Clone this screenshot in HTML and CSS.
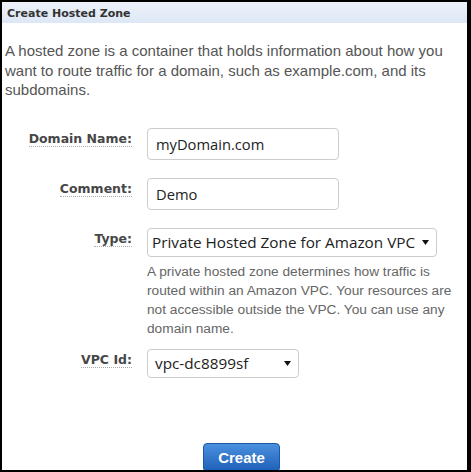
FILE: index.html
```html
<!DOCTYPE html>
<html lang="en">
<head>
  <meta charset="UTF-8">
  <meta name="viewport" content="width=device-width, initial-scale=1.0">
  <title>Create Hosted Zone</title>
  <link rel="stylesheet" href="styles.css">
</head>
<body>
  <div class="panel">
    <div class="panel-header">Create Hosted Zone</div>
    <p class="intro">A hosted zone is a container that holds information about how you want to route traffic for a domain, such as example.com, and its subdomains.</p>

    <div class="form">
      <div class="row">
        <div class="label"><span>Domain Name:</span></div>
        <div class="control"><input class="text-input" type="text" value="myDomain.com"></div>
      </div>
      <div class="row">
        <div class="label"><span>Comment:</span></div>
        <div class="control"><input class="text-input" type="text" value="Demo"></div>
      </div>
      <div class="row row-type">
        <div class="label"><span>Type:</span></div>
        <div class="control">
          <div class="select select-type">
            <span>Private Hosted Zone for Amazon VPC</span>
            <svg class="arrow" width="7" height="5" viewBox="0 0 7 5"><polygon points="0,0 7,0 3.5,5" fill="#111"/></svg>
          </div>
          <p class="help">A private hosted zone determines how traffic is routed within an Amazon VPC. Your resources are not accessible outside the VPC. You can use any domain name.</p>
        </div>
      </div>
      <div class="row row-vpc">
        <div class="label"><span>VPC Id:</span></div>
        <div class="control">
          <div class="select select-vpc">
            <span>vpc-dc8899sf</span>
            <svg class="arrow" width="7" height="5" viewBox="0 0 7 5"><polygon points="0,0 7,0 3.5,5" fill="#111"/></svg>
          </div>
        </div>
      </div>
    </div>

    <div class="actions">
      <button class="btn-create">Create</button>
    </div>
  </div>
</body>
</html>
```

FILE: styles.css
```css
body { margin: 0; background: #fff; }
.panel { width: 471px; height: 472px; box-sizing: border-box; border: 2px solid #000; border-right-width: 4px; overflow: hidden; background: #fff; }
.panel-header { height: 21px; box-sizing: border-box; padding: 3px 0 0 5px; line-height: 18px; font-family: "DejaVu Sans", Verdana, sans-serif; font-size: 11px; font-weight: bold; color: #333; background: linear-gradient(#edf2fa, #dde7f5); }
.intro { margin: 18px 0 0; padding: 0 3px; font-family: "Liberation Sans", Arial, sans-serif; font-size: 15px; line-height: 19.5px; color: #555; }

.form { margin-top: 28px; }
.row { display: grid; grid-template-columns: 130px 1fr; column-gap: 15px; margin-bottom: 18px; }
.row-type { margin-bottom: 11px; }
.row-vpc { margin-bottom: 65px; }
.label { text-align: right; padding-top: 2px; line-height: 17px; font-family: "DejaVu Sans", Verdana, sans-serif; font-size: 12.5px; font-weight: bold; color: #474747; }
.label span { border-bottom: 1px dotted #aaa; }

.text-input { display: block; width: 192px; height: 32px; box-sizing: border-box; margin: 0; padding: 0 8px; border: 1px solid #ccc; border-radius: 4px; font-family: "Open Sans", "Segoe UI", sans-serif; font-size: 14.7px; color: #222; background: #fff; outline: none; }
.select { display: flex; align-items: center; justify-content: space-between; height: 29px; box-sizing: border-box; padding: 0 7px 0 4px; border: 1px solid #ccc; border-radius: 4px; font-family: "Open Sans", "Segoe UI", sans-serif; font-size: 15.3px; color: #222; background: #fff; }
.select-type { width: 290px; }
.select-vpc { width: 152px; padding-left: 7px; }
.arrow { display: block; }
.help { margin: 5px 0 0; max-width: 312px; font-family: "Liberation Sans", Arial, sans-serif; font-size: 13.7px; line-height: 19px; color: #666; }

.actions { padding-left: 201px; }
.btn-create { display: block; width: 77px; height: 29px; margin: 0; padding: 0; border: 1px solid #1b58a8; border-radius: 4px; background: linear-gradient(#4a90df, #1e60b8); color: #fff; font-family: "Liberation Sans", Arial, sans-serif; font-size: 15px; font-weight: bold; cursor: pointer; }
```
